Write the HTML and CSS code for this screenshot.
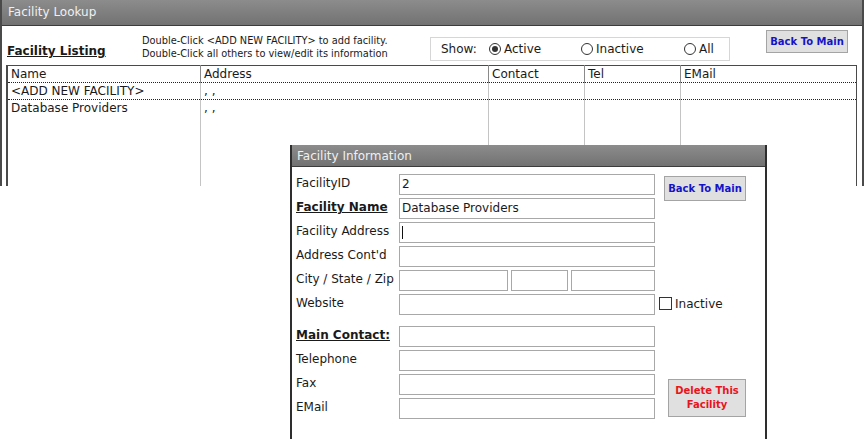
FILE: index.html
```html
<!DOCTYPE html>
<html lang="en">
<head>
    <meta charset="UTF-8">
    <title>Facility Lookup</title>
    <link rel="stylesheet" href="styles.css">
</head>
<body>
    <div class="window lookup">
        <div class="titlebar">Facility Lookup</div>
        <div class="lookup-head">
            <div class="listing-title">Facility Listing</div>
            <div class="hint">
                Double-Click &lt;ADD NEW FACILITY&gt; to add facility.<br>
                Double-Click all others to view/edit its information
            </div>
            <div class="show-box">
                <span class="show-label">Show:</span>
                <span class="radio-item r-active"><span class="radio checked"></span>Active</span>
                <span class="radio-item r-inactive"><span class="radio"></span>Inactive</span>
                <span class="radio-item r-all"><span class="radio"></span>All</span>
            </div>
            <button class="btn btn-main lookup-back">Back To Main</button>
        </div>
        <table class="listing">
            <thead>
                <tr>
                    <th class="c-name">Name</th>
                    <th class="c-addr">Address</th>
                    <th class="c-contact">Contact</th>
                    <th class="c-tel">Tel</th>
                    <th>EMail</th>
                </tr>
            </thead>
            <tbody>
                <tr class="dotted">
                    <td>&lt;ADD NEW FACILITY&gt;</td>
                    <td class="commas">, ,</td>
                    <td></td><td></td><td></td>
                </tr>
                <tr>
                    <td>Database Providers</td>
                    <td class="commas">, ,</td>
                    <td></td><td></td><td></td>
                </tr>
                <tr class="filler">
                    <td></td><td></td><td></td><td></td><td></td>
                </tr>
            </tbody>
        </table>
    </div>

    <div class="window info">
        <div class="titlebar small">Facility Information</div>
        <div class="info-form">
            <label>FacilityID</label>
            <div class="field">2</div>
            <button class="btn btn-main info-back">Back To Main</button>

            <label class="strong">Facility Name</label>
            <div class="field">Database Providers</div>
            <span></span>

            <label>Facility Address</label>
            <div class="field"><span class="caret"></span></div>
            <span></span>

            <label>Address Cont'd</label>
            <div class="field"></div>
            <span></span>

            <label>City / State / Zip</label>
            <div class="city-row">
                <div class="field city"></div>
                <div class="field state"></div>
                <div class="field zip"></div>
            </div>
            <span></span>

            <label>Website</label>
            <div class="field"></div>
            <div class="check-item"><span class="checkbox"></span>Inactive</div>

            <div class="spacer"></div>

            <label class="strong">Main Contact:</label>
            <div class="field"></div>
            <span></span>

            <label>Telephone</label>
            <div class="field"></div>
            <span></span>

            <label>Fax</label>
            <div class="field"></div>
            <button class="btn btn-delete">Delete This Facility</button>

            <label>EMail</label>
            <div class="field"></div>
        </div>
    </div>
</body>
</html>
```

FILE: styles.css
```css
body, html {
    margin: 0;
    padding: 0;
    width: 864px;
    height: 439px;
    overflow: hidden;
    background-color: #fff;
    font-family: 'DejaVu Sans', sans-serif;
    font-size: 11px;
    color: #1a1a1a;
}
body {
    position: relative;
}
.window {
    background-color: #fff;
    border-left: 2px solid #4a4a4a;
    border-right: 2px solid #4a4a4a;
    box-sizing: border-box;
    overflow: hidden;
}
.titlebar {
    height: 25px;
    line-height: 25px;
    padding-left: 6px;
    color: #f0f0f0;
    font-size: 12px;
    background: linear-gradient(#8c8c8c, #727272);
    border-bottom: 1px solid #3c3c3c;
}
.titlebar.small {
    height: 21px;
    line-height: 22px;
    padding-left: 5px;
}

/* ---- lookup window ---- */
.lookup {
    width: 864px;
    height: 186px;
}
.lookup-head {
    display: flex;
    align-items: flex-start;
    height: 39px;
    padding-left: 5px;
}
.listing-title {
    width: 135px;
    margin-top: 18px;
    font-weight: bold;
    font-size: 12px;
    text-decoration: underline;
}
.hint {
    width: 288px;
    margin-top: 8px;
    line-height: 13px;
    font-size: 9.8px;
}
.show-box {
    display: flex;
    align-items: center;
    width: 298px;
    height: 22px;
    margin-top: 11px;
    border: 1px solid #d6d6d6;
    font-size: 12px;
}
.show-label {
    margin-left: 10px;
    width: 48px;
}
.radio-item {
    display: flex;
    align-items: center;
}
.r-active { width: 92px; }
.r-inactive { width: 103px; }
.radio {
    width: 12px;
    height: 12px;
    border: 1px solid #333;
    border-radius: 50%;
    margin-right: 3px;
    box-sizing: border-box;
    position: relative;
}
.radio.checked::after {
    content: '';
    position: absolute;
    left: 2px;
    top: 2px;
    width: 6px;
    height: 6px;
    border-radius: 50%;
    background-color: #333;
}
.btn {
    font-family: 'DejaVu Sans', sans-serif;
    font-weight: bold;
    font-size: 10px;
    background-color: #e0e0e0;
    border: 1px solid #a4a4a4;
    padding: 0;
    cursor: pointer;
}
.btn-main {
    color: #1414c8;
    white-space: nowrap;
}
.lookup-back {
    width: 82px;
    height: 23px;
    margin-left: auto;
    margin-right: 14px;
    margin-top: 4px;
}
.listing {
    margin-left: 4px;
    width: 851px;
    height: 130px;
    border-collapse: collapse;
    border: 1px solid #4a4a4a;
    border-left-width: 2px;
    font-size: 12px;
}
.listing th, .listing td {
    text-align: left;
    font-weight: normal;
    padding: 0 3px;
    height: 16px;
    line-height: 16px;
    border-left: 1px solid #c4c4c4;
    vertical-align: top;
    white-space: nowrap;
}
.listing th {
    border-left-color: #8a8a8a;
    border-bottom: 1px dotted #222;
}
.listing tr.dotted td {
    border-bottom: 1px dotted #222;
}
.listing tr.filler td {
    height: auto;
}
.c-name { width: 186px; }
.c-addr { width: 281px; }
.c-contact { width: 89px; }
.c-tel { width: 89px; }
.commas {
    padding-top: 2px;
}

/* ---- information window ---- */
.info {
    position: absolute;
    left: 290px;
    top: 145px;
    width: 477px;
    height: 300px;
    border-left-color: #2e2e2e;
    border-right-color: #2e2e2e;
}
.info-form {
    display: grid;
    grid-template-columns: 103px 256px 1fr;
    grid-template-rows: repeat(6, 21px) 5px repeat(4, 21px);
    row-gap: 3px;
    padding: 7px 0 0 4px;
    font-size: 12px;
}
.info-form label {
    line-height: 18px;
}
.info-form label.strong {
    font-weight: bold;
    text-decoration: underline;
}
.field {
    border: 1px solid #a8a8a8;
    box-sizing: border-box;
    height: 21px;
    line-height: 19px;
    padding-left: 2px;
    position: relative;
}
.caret {
    position: absolute;
    left: 2px;
    top: 3px;
    width: 1px;
    height: 13px;
    background-color: #111;
}
.city-row {
    display: flex;
    gap: 3px;
}
.city { width: 109px; }
.state { width: 57px; }
.zip { flex: 1; }
.spacer {
    grid-column: 1 / 4;
}
.info-back {
    width: 82px;
    height: 25px;
    margin: 2px 0 0 9px;
}
.check-item {
    display: flex;
    align-items: center;
    margin-left: 4px;
    height: 19px;
}
.checkbox {
    width: 13px;
    height: 13px;
    border: 1px solid #333;
    box-sizing: border-box;
    margin-right: 3px;
}
.btn-delete {
    grid-row: span 2;
    color: #e8141e;
    width: 78px;
    height: 38px;
    margin: 5px 0 0 13px;
    line-height: 14px;
}
```
